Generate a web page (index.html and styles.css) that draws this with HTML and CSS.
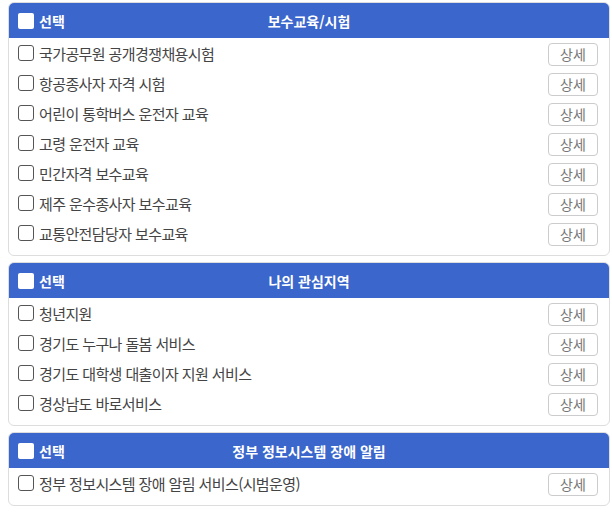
FILE: index.html
```html
<!DOCTYPE html>
<html lang="ko">
<head>
    <meta charset="UTF-8">
    <title>알림 설정</title>
    <link rel="stylesheet" href="styles.css">
</head>
<body>
    <div class="container">
        <!-- 보수교육/시험 -->
        <div class="card">
            <div class="card-head">
                <label class="select-all"><span class="head-box"></span>선택</label>
                <div class="card-title">보수교육/시험</div>
                <div></div>
            </div>
            <ul class="item-list">
                <li><label><span class="box"></span>국가공무원 공개경쟁채용시험</label><button>상세</button></li>
                <li><label><span class="box"></span>항공종사자 자격 시험</label><button>상세</button></li>
                <li><label><span class="box"></span>어린이 통학버스 운전자 교육</label><button>상세</button></li>
                <li><label><span class="box"></span>고령 운전자 교육</label><button>상세</button></li>
                <li><label><span class="box"></span>민간자격 보수교육</label><button>상세</button></li>
                <li><label><span class="box"></span>제주 운수종사자 보수교육</label><button>상세</button></li>
                <li><label><span class="box"></span>교통안전담당자 보수교육</label><button>상세</button></li>
            </ul>
        </div>

        <!-- 나의 관심지역 -->
        <div class="card">
            <div class="card-head">
                <label class="select-all"><span class="head-box"></span>선택</label>
                <div class="card-title">나의 관심지역</div>
                <div></div>
            </div>
            <ul class="item-list">
                <li><label><span class="box"></span>청년지원</label><button>상세</button></li>
                <li><label><span class="box"></span>경기도 누구나 돌봄 서비스</label><button>상세</button></li>
                <li><label><span class="box"></span>경기도 대학생 대출이자 지원 서비스</label><button>상세</button></li>
                <li><label><span class="box"></span>경상남도 바로서비스</label><button>상세</button></li>
            </ul>
        </div>

        <!-- 정부 정보시스템 장애 알림 -->
        <div class="card">
            <div class="card-head">
                <label class="select-all"><span class="head-box"></span>선택</label>
                <div class="card-title">정부 정보시스템 장애 알림</div>
                <div></div>
            </div>
            <ul class="item-list">
                <li><label><span class="box"></span>정부 정보시스템 장애 알림 서비스(시범운영)</label><button>상세</button></li>
            </ul>
        </div>

        <!-- next section starts below the fold -->
        <div class="card card-next"></div>
    </div>
</body>
</html>
```

FILE: styles.css
```css
body { margin: 0; background-color: #fff; font-family: "Noto Sans CJK KR", "Noto Sans", sans-serif; color: #444; }
.container { display: flex; flex-direction: column; gap: 6px; padding: 2px 2px 0 8px; }
.card { border: 1px solid #ddd; border-radius: 6px; overflow: hidden; padding-bottom: 7px; background-color: #fff; }
.card-next { height: 40px; padding: 0; }
.card-head {
    display: grid;
    grid-template-columns: 1fr auto 1fr;
    align-items: center;
    height: 35px;
    padding: 0 9px;
    background-color: #3b66cc;
    color: #fff;
    font-size: 14px;
    font-weight: bold;
}
.select-all { display: flex; align-items: center; gap: 5px; }
.head-box { width: 16px; height: 16px; background-color: #fff; border-radius: 2px; }
.card-title { text-align: center; }
.item-list { list-style: none; margin: 0; padding: 0 11px 0 9px; }
.item-list li { display: flex; align-items: center; justify-content: space-between; height: 30px; }
.item-list label { display: flex; align-items: center; gap: 5px; font-size: 15px; letter-spacing: -0.6px; color: #444; }
.box { width: 14px; height: 14px; border: 1px solid #555; border-radius: 3px; background-color: #fff; }
button {
    width: 50px;
    height: 23px;
    margin-top: 2px;
    padding: 0;
    border: 1px solid #ccc;
    border-radius: 4px;
    background-color: #fff;
    color: #777;
    font-family: inherit;
    font-size: 14px;
    cursor: pointer;
}
button:hover { background-color: #f4f4f4; }
```
